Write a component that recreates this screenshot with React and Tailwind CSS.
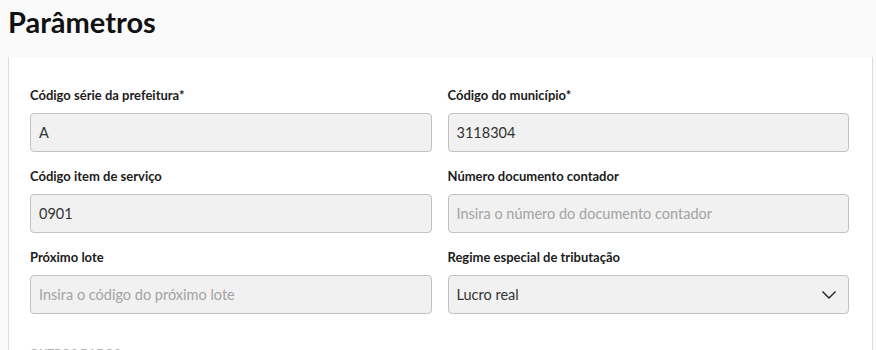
const fields = [
  { label: 'Código série da prefeitura*', value: 'A' },
  { label: 'Código do município*', value: '3118304' },
  { label: 'Código item de serviço', value: '0901' },
  { label: 'Número documento contador', placeholder: 'Insira o número do documento contador' },
  { label: 'Próximo lote', placeholder: 'Insira o código do próximo lote' },
  { label: 'Regime especial de tributação', value: 'Lucro real', select: true },
]

function Field({ field }) {
  return (
    <div className="flex flex-col">
      <label className="text-[13px] leading-4 font-bold text-[#1c1c1c] mb-[10px]">{field.label}</label>
      <div className="h-[39px] rounded-[4px] border border-[#c2c2c2] bg-[#f1f1f1] flex items-center px-2 text-[14.5px]">
        {field.value ? (
          <span className="text-[#333] flex-1">{field.value}</span>
        ) : (
          <span className="text-[#a3a3a3] flex-1">{field.placeholder}</span>
        )}
        {field.select && (
          <svg width="16" height="10" viewBox="0 0 16 10" fill="none" className="mr-[3px]">
            <path d="M1.5 1.5l6.5 6.5 6.5-6.5" stroke="#222" strokeWidth="1.4" />
          </svg>
        )}
      </div>
    </div>
  )
}

export default function App() {
  return (
    <div className="min-h-screen bg-[#fafafa] px-2 font-['Lato','Noto_Sans',sans-serif]">
      <div className="h-[57px] pt-[7px]">
        <h1 className="text-[29px] leading-none font-bold text-[#111]">Parâmetros</h1>
      </div>
      <div className="w-[865px] bg-white border-x border-[#dcdcdc] pl-[21px] pr-[23px] pt-[30px]">
        <div className="grid grid-cols-2 gap-x-4 gap-y-4">
          {fields.map(f => (
            <Field key={f.label} field={f} />
          ))}
        </div>
        <div className="pt-[31px] text-[11px] font-bold uppercase tracking-wide text-[#b0b0b0]">
          Outros dados
        </div>
      </div>
    </div>
  )
}
